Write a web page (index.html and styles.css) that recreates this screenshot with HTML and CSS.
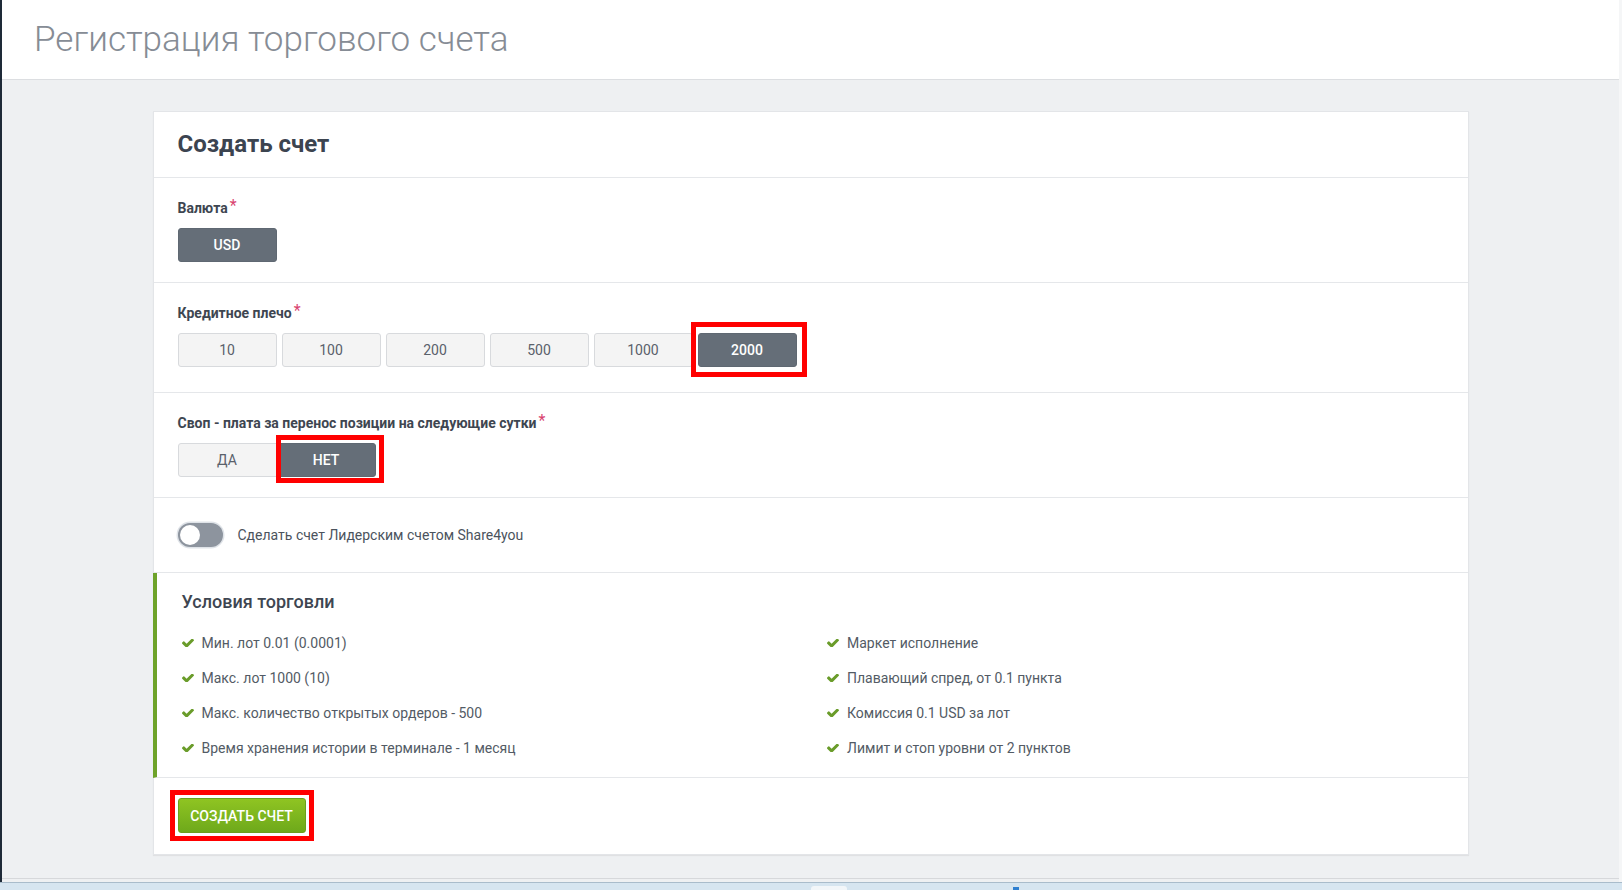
FILE: index.html
```html
<!DOCTYPE html>
<html lang="ru">
<head>
<meta charset="utf-8">
<title>Регистрация торгового счета</title>
<link rel="stylesheet" href="styles.css">
</head>
<body>
<div class="screen">
  <div class="app">
    <div class="edge-left"></div>
    <div class="main">
      <header class="page-header">
        <h1>Регистрация торгового счета</h1>
      </header>
      <div class="page-body">
        <div class="card">
          <div class="card-head">
            <h2>Создать счет</h2>
          </div>

          <div class="section">
            <div class="label">Валюта<span class="req">*</span></div>
            <div class="btn-row">
              <button class="opt active">USD</button>
            </div>
          </div>

          <div class="section section-lev">
            <div class="label">Кредитное плечо<span class="req">*</span></div>
            <div class="btn-row">
              <button class="opt">10</button>
              <button class="opt">100</button>
              <button class="opt">200</button>
              <button class="opt">500</button>
              <button class="opt">1000</button>
              <span class="marked">
                <button class="opt active">2000</button>
                <span class="mark mark-lev"></span>
              </span>
            </div>
          </div>

          <div class="section">
            <div class="label">Своп - плата за перенос позиции на следующие сутки<span class="req">*</span></div>
            <div class="group">
              <button class="opt first">ДА</button>
              <span class="marked">
                <button class="opt last active">НЕТ</button>
                <span class="mark mark-net"></span>
              </span>
            </div>
          </div>

          <div class="section section-toggle">
            <span class="toggle"><span class="knob"></span></span>
            <span class="toggle-text">Сделать счет Лидерским счетом Share4you</span>
          </div>

          <div class="conditions">
            <h3>Условия торговли</h3>
            <div class="cond-grid">
              <ul>
                <li><svg class="check" viewBox="121 402 1550 1024" width="12" height="8"><path d="M1671 566q0 40-28 68l-724 724-136 136q-28 28-68 28t-68-28l-136-136-362-362q-28-28-28-68t28-68l136-136q28-28 68-28t68 28l294 295 656-657q28-28 68-28t68 28l136 136q28 28 28 68z"/></svg>Мин. лот 0.01 (0.0001)</li>
                <li><svg class="check" viewBox="121 402 1550 1024" width="12" height="8"><path d="M1671 566q0 40-28 68l-724 724-136 136q-28 28-68 28t-68-28l-136-136-362-362q-28-28-28-68t28-68l136-136q28-28 68-28t68 28l294 295 656-657q28-28 68-28t68 28l136 136q28 28 28 68z"/></svg>Макс. лот 1000 (10)</li>
                <li><svg class="check" viewBox="121 402 1550 1024" width="12" height="8"><path d="M1671 566q0 40-28 68l-724 724-136 136q-28 28-68 28t-68-28l-136-136-362-362q-28-28-28-68t28-68l136-136q28-28 68-28t68 28l294 295 656-657q28-28 68-28t68 28l136 136q28 28 28 68z"/></svg>Макс. количество открытых ордеров - 500</li>
                <li><svg class="check" viewBox="121 402 1550 1024" width="12" height="8"><path d="M1671 566q0 40-28 68l-724 724-136 136q-28 28-68 28t-68-28l-136-136-362-362q-28-28-28-68t28-68l136-136q28-28 68-28t68 28l294 295 656-657q28-28 68-28t68 28l136 136q28 28 28 68z"/></svg>Время хранения истории в терминале - 1 месяц</li>
              </ul>
              <ul>
                <li><svg class="check" viewBox="121 402 1550 1024" width="12" height="8"><path d="M1671 566q0 40-28 68l-724 724-136 136q-28 28-68 28t-68-28l-136-136-362-362q-28-28-28-68t28-68l136-136q28-28 68-28t68 28l294 295 656-657q28-28 68-28t68 28l136 136q28 28 28 68z"/></svg>Маркет исполнение</li>
                <li><svg class="check" viewBox="121 402 1550 1024" width="12" height="8"><path d="M1671 566q0 40-28 68l-724 724-136 136q-28 28-68 28t-68-28l-136-136-362-362q-28-28-28-68t28-68l136-136q28-28 68-28t68 28l294 295 656-657q28-28 68-28t68 28l136 136q28 28 28 68z"/></svg>Плавающий спред, от 0.1 пункта</li>
                <li><svg class="check" viewBox="121 402 1550 1024" width="12" height="8"><path d="M1671 566q0 40-28 68l-724 724-136 136q-28 28-68 28t-68-28l-136-136-362-362q-28-28-28-68t28-68l136-136q28-28 68-28t68 28l294 295 656-657q28-28 68-28t68 28l136 136q28 28 28 68z"/></svg>Комиссия 0.1 USD за лот</li>
                <li><svg class="check" viewBox="121 402 1550 1024" width="12" height="8"><path d="M1671 566q0 40-28 68l-724 724-136 136q-28 28-68 28t-68-28l-136-136-362-362q-28-28-28-68t28-68l136-136q28-28 68-28t68 28l294 295 656-657q28-28 68-28t68 28l136 136q28 28 28 68z"/></svg>Лимит и стоп уровни от 2 пунктов</li>
              </ul>
            </div>
          </div>

          <div class="card-foot">
            <span class="marked">
              <button class="btn-create">Создать счет</button>
              <span class="mark mark-create"></span>
            </span>
          </div>
        </div>
      </div>
      <div class="page-foot"></div>
    </div>
    <div class="edge-right"></div>
  </div>
  <div class="taskbar">
    <span class="tb-item"></span>
    <span class="tb-icon"></span>
  </div>
</div>
</body>
</html>
```

FILE: styles.css
```css
* { box-sizing: border-box; }

html, body {
  margin: 0;
  padding: 0;
}

body {
  width: 1622px;
  height: 890px;
  overflow: hidden;
  background: #ffffff;
  font-family: Roboto, "Noto Sans", "Liberation Sans", sans-serif;
  color: #3e4651;
}

.screen {
  display: flex;
  flex-direction: column;
  height: 890px;
}

.app {
  display: flex;
  height: 882px;
}

.edge-left {
  width: 2px;
  background: #1e2a38;
}

.edge-right {
  width: 3px;
  background: #f5f6f7;
}

.main {
  flex: 1;
  display: flex;
  flex-direction: column;
}

.page-header {
  height: 80px;
  padding: 17px 0 0 32px;
  background: #ffffff;
  border-bottom: 1px solid #dcdee1;
}

.page-header h1 {
  margin: 0;
  font-size: 35px;
  line-height: 46px;
  font-weight: 300;
  color: #868c95;
}

.page-body {
  flex: 1;
  background: #eef0f2;
  border-bottom: 1px solid #d6d8db;
  padding-top: 31px;
}

.page-foot {
  height: 3px;
  background: #eef0f2;
}

.card {
  width: 1316px;
  margin: 0 auto;
  background: #ffffff;
  border: 1px solid #e3e5e8;
  box-shadow: 0 1px 1px rgba(0, 0, 0, 0.06);
}

.card-head {
  padding: 18px 24px 19px;
  border-bottom: 1px solid #e5e7ea;
}

.card-head h2 {
  margin: 0;
  font-size: 24px;
  line-height: 28px;
  font-weight: 700;
  color: #3c4450;
}

.section {
  padding: 20px 24px;
  border-bottom: 1px solid #e5e7ea;
}

.section-lev {
  padding-bottom: 25px;
}

.label {
  font-size: 14px;
  line-height: 20px;
  font-weight: 700;
  color: #3e4651;
  margin-bottom: 10px;
}

.req {
  color: #d9436f;
  font-size: 16px;
  font-weight: 400;
  margin-left: 2px;
  position: relative;
  top: -2px;
}

.btn-row {
  display: flex;
  gap: 5px;
}

.group {
  display: flex;
}

.opt {
  display: block;
  width: 99px;
  height: 34px;
  padding: 0;
  margin: 0;
  border: 1px solid #d8dadd;
  border-radius: 3px;
  background: #f4f4f4;
  font-family: Roboto, "Noto Sans", sans-serif;
  font-size: 14px;
  font-weight: 400;
  line-height: 32px;
  color: #5a616b;
  text-align: center;
}

.opt.active {
  background: #656e78;
  border-color: #5f6872;
  color: #ffffff;
  font-weight: 500;
}

.group .first {
  border-radius: 3px 0 0 3px;
}

.group .last {
  border-radius: 0 3px 3px 0;
}

.marked {
  position: relative;
  display: inline-flex;
}

.mark {
  position: absolute;
  border: 5px solid #ff0000;
  pointer-events: none;
}

.mark-lev {
  left: -7px;
  top: -11px;
  right: -10px;
  bottom: -10px;
}

.mark-net {
  left: -1px;
  top: -8px;
  right: -8px;
  bottom: -6px;
}

.mark-create {
  left: -8px;
  top: -8px;
  right: -8px;
  bottom: -8px;
}

.section-toggle {
  display: flex;
  align-items: center;
  gap: 15px;
  padding: 25px 24px;
}

.toggle {
  display: flex;
  align-items: center;
  width: 45px;
  height: 24px;
  padding: 2px;
  border-radius: 12px;
  background: #8d949e;
  box-shadow: 0 0 0 1.5px #dfe3e8;
}

.knob {
  width: 20px;
  height: 20px;
  border-radius: 50%;
  background: #ffffff;
}

.toggle-text {
  font-size: 14px;
  line-height: 20px;
  color: #4b535d;
}

.conditions {
  margin-left: -1px;
  border-left: 4px solid #6ea32a;
  border-bottom: 1px solid #e5e7ea;
  padding: 18px 25px 12px;
}

.conditions h3 {
  margin: 0;
  font-size: 18px;
  line-height: 22px;
  font-weight: 500;
  color: #3e4651;
}

.cond-grid {
  display: grid;
  grid-template-columns: 1fr 1fr;
  column-gap: 30px;
  margin-top: 12px;
}

.cond-grid ul {
  list-style: none;
  margin: 0;
  padding: 0;
}

.cond-grid li {
  display: flex;
  align-items: center;
  gap: 8px;
  height: 35px;
  font-size: 14px;
  color: #535b65;
}

.check {
  flex: none;
  fill: #6a9c2a;
}

.card-foot {
  padding: 20px 24px 21px;
}

.btn-create {
  display: block;
  width: 128px;
  height: 35px;
  padding: 0;
  margin: 0;
  border: 1px solid #6c9e1e;
  border-radius: 3px;
  background: linear-gradient(#8fc422, #6ea91b);
  font-family: Roboto, "Noto Sans", sans-serif;
  font-size: 14px;
  font-weight: 500;
  letter-spacing: 0;
  text-transform: uppercase;
  color: #ffffff;
}

.taskbar {
  display: flex;
  align-items: flex-end;
  height: 8px;
  padding-left: 811px;
  background: #d6e5f0;
  border-top: 1px solid #a9bccb;
}

.tb-item {
  width: 36px;
  height: 4px;
  background: #f2f6f9;
  border-radius: 3px 3px 0 0;
}

.tb-icon {
  width: 6px;
  height: 3px;
  margin-left: 166px;
  background: #2f7fd0;
}
```
